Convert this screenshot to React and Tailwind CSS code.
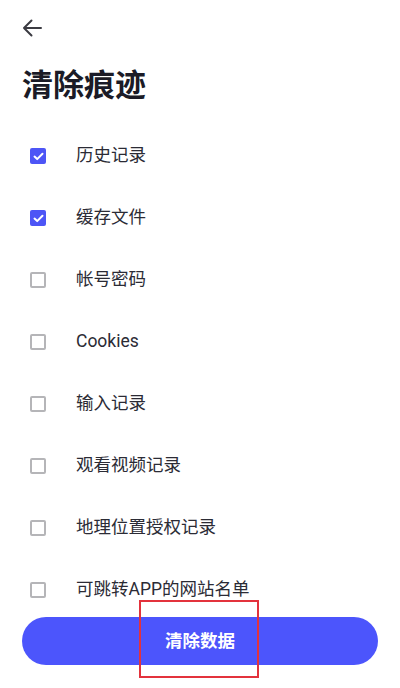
import React, { useState } from "react";

const items = [
  { label: "历史记录", checked: true },
  { label: "缓存文件", checked: true },
  { label: "帐号密码", checked: false },
  { label: "Cookies", checked: false },
  { label: "输入记录", checked: false },
  { label: "观看视频记录", checked: false },
  { label: "地理位置授权记录", checked: false },
  { label: "可跳转APP的网站名单", checked: false },
];

const CheckBox = ({ checked }) =>
  checked ? (
    <span className="w-4 h-4 rounded-[2px] bg-[#4d55f6] flex items-center justify-center">
      <svg width="11" height="9" viewBox="0 0 11 9" fill="none">
        <path d="M1.5 4.6 L4.2 7.1 L9.5 1.8" stroke="white" strokeWidth="2" strokeLinecap="round" strokeLinejoin="round" />
      </svg>
    </span>
  ) : (
    <span className="w-4 h-4 rounded-[2px] border-2 border-[#b5b5b8]" />
  );

export default function App() {
  const [list, setList] = useState(items);

  const toggle = (i) =>
    setList(list.map((it, idx) => (idx === i ? { ...it, checked: !it.checked } : it)));

  return (
    <div
      className="relative w-[400px] h-[688px] bg-white overflow-hidden"
      style={{ fontFamily: 'Roboto, "Noto Sans CJK SC", sans-serif' }}
    >
      {/* Back arrow */}
      <div className="pt-[19px] pl-[22px] h-[37px]">
        <svg width="20" height="18" viewBox="0 0 20 18" fill="none">
          <path d="M19 9 H2 M9.5 1.5 L2 9 L9.5 16.5" stroke="#3b3b42" strokeWidth="2" strokeLinecap="round" strokeLinejoin="round" />
        </svg>
      </div>

      <h1 className="mt-[29px] pl-[22px] h-[40px] leading-[40px] text-[31px] font-bold text-[#1b1b26]">
        清除痕迹
      </h1>

      {/* Options */}
      <div className="mt-[19px] flex flex-col">
        {list.map((it, i) => (
          <div
            key={it.label}
            onClick={() => toggle(i)}
            className="h-[62px] flex items-center pl-[30px]"
          >
            <CheckBox checked={it.checked} />
            <span className="ml-[30px] text-[17.5px] leading-[22px] -mt-[2px] text-[#2b2b35]">{it.label}</span>
          </div>
        ))}
      </div>

      {/* Bottom button */}
      <button
        type="button"
        className="absolute left-[22px] right-[22px] bottom-[23px] h-[48px] rounded-full bg-[#4c55fc] text-white text-[17.5px] font-bold"
      >
        清除数据
      </button>

      {/* Annotation box */}
      <div className="absolute left-[139px] top-[600px] w-[120px] h-[78px] border-2 border-[#e3323c] pointer-events-none" />
    </div>
  );
}
